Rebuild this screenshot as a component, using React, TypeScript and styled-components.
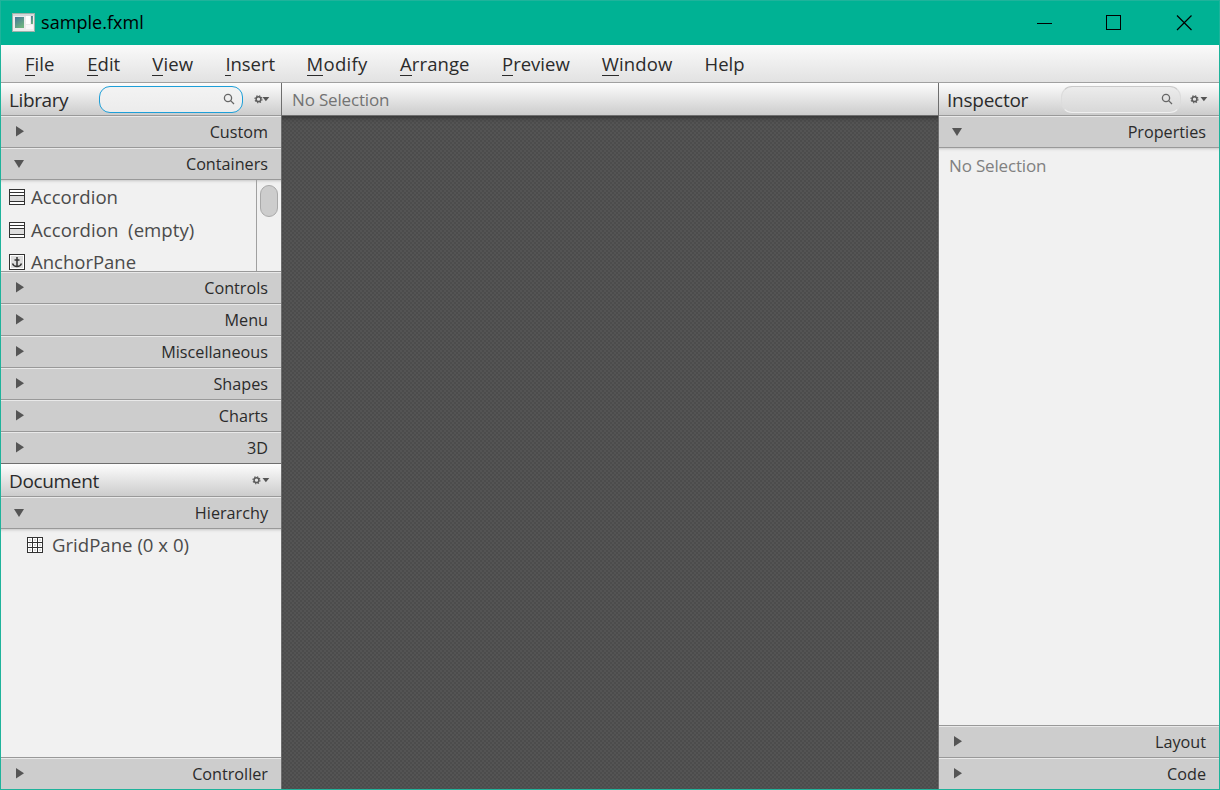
import React from "react";
import styled, { createGlobalStyle } from "styled-components";

const GlobalStyle = createGlobalStyle`
  * { box-sizing: border-box; }
  body { margin: 0; overflow: hidden; font-family: "Open Sans", "Noto Sans", sans-serif; color: #2a2a2a; }
`;

const Win = styled.div`
  width: 1220px;
  height: 790px;
  display: flex;
  flex-direction: column;
  border: 1px solid #1fb39b;
  background: #f1f1f1;
`;

const Label = styled.span<{ $size: number; $color?: string; $gap?: number }>`
  font-size: ${(p) => p.$size}px;
  line-height: 24px;
  letter-spacing: ${(p) => p.$gap ?? 0}px;
  color: ${(p) => p.$color ?? "#2b2b2b"};
  white-space: pre;
`;

const ItemLabel = styled(Label)`
  line-height: 16px;
`;

const Heading = styled(Label)`
  padding-top: 2px;
  margin-right: auto;
`;

const TitleBar = styled.header`
  height: 44px;
  flex: none;
  display: flex;
  align-items: center;
  background: #00b294;
  padding: 0 18px 2px 11px;
  gap: 6px;
`;

const WindowButtons = styled.div`
  margin-left: auto;
  padding: 2px 8px 0 0;
  display: flex;
  gap: 54px;
`;

const MenuBar = styled.nav`
  height: 38px;
  flex: none;
  display: flex;
  align-items: center;
  padding-left: 24px;
  background: linear-gradient(#fafafa, #e2e2e2);
  border-bottom: 1px solid #a0a0a0;
`;

const MenuItem = styled(Label)<{ $after: number }>`
  margin-right: ${(p) => p.$after}px;
`;

const Mnemonic = styled.span`
  border-bottom: 1px solid #2b2b2b;
  display: inline-block;
  height: 24px;
`;

const Body = styled.main`
  flex: 1;
  min-height: 0;
  display: grid;
  grid-template-columns: 281px 656px 281px;
`;

const LeftColumn = styled.section`
  display: flex;
  flex-direction: column;
  border-right: 1px solid #6e6e6e;
  min-height: 0;
`;

const RightColumn = styled(LeftColumn)`
  border-right: 0;
  border-left: 1px solid #6e6e6e;
`;

const Header = styled.div<{ $line?: string; $indent?: number }>`
  height: 33px;
  flex: none;
  display: flex;
  align-items: center;
  padding: 0 11px 0 ${(p) => p.$indent ?? 8}px;
  background: linear-gradient(#fdfdfd, #cccccc);
  border-bottom: 1px solid ${(p) => p.$line ?? "#999"};
`;

const Search = styled.div<{ $focused?: boolean; $w: number }>`
  width: ${(p) => p.$w}px;
  height: 27px;
  margin-right: 9px;
  padding-right: 7px;
  border-radius: 11px;
  border: 1px solid ${(p) => (p.$focused ? "#1d9fd8" : "#c9c9c9")};
  ${(p) => !p.$focused && "border-bottom-color:#efefef;border-right-color:#dcdcdc;border-left-color:#dcdcdc;"}
  background: ${(p) => (p.$focused ? "linear-gradient(#f3f3f3, #ececec)" : "linear-gradient(#ececec, #d8d8d8)")};
  display: flex;
  align-items: center;
  justify-content: flex-end;
`;

const Row = styled.div<{ $line?: string; $last?: boolean }>`
  height: ${(p) => (p.$last ? 31 : 32)}px;
  flex: none;
  display: flex;
  align-items: center;
  justify-content: space-between;
  padding: 0 13px;
  background: #cdcdcd;
  border-top: 1px solid #e9e9e9;
  border-bottom: ${(p) => (p.$last ? "0" : `1px solid ${p.$line ?? "#999"}`)};
`;

const Pane = styled.div<{ $h?: number }>`
  ${(p) => (p.$h ? `height: ${p.$h}px; flex: none;` : "flex: 1; min-height: 0;")}
  display: flex;
  overflow: hidden;
  background: #f1f1f1;
  border-bottom: 1px solid #999;
  box-shadow: inset 0 4px 3px -3px #c4c4c4;
`;

const List = styled.div`
  flex: 1;
  display: flex;
  flex-direction: column;
  padding-top: 1px;
`;

const ListItem = styled.div<{ $indent?: number; $h?: number; $space?: number }>`
  height: ${(p) => p.$h ?? 32.5}px;
  flex: none;
  display: flex;
  align-items: center;
  gap: ${(p) => p.$space ?? 6}px;
  padding-left: ${(p) => p.$indent ?? 8}px;
`;

const ScrollTrack = styled.div`
  width: 25px;
  border-left: 1px solid #a0a0a0;
  padding: 5px 3px;
`;

const ScrollThumb = styled.div`
  width: 18px;
  height: 32px;
  border-radius: 9px;
  background: #cdcdcd;
  border: 1px solid #a9a9a9;
`;

const Center = styled.section`
  display: flex;
  flex-direction: column;
`;

const Canvas = styled.div`
  flex: 1;
  background-color: #505050;
  background-image: conic-gradient(#4c4c4c 25%, #545454 0 50%, #4c4c4c 0 75%, #545454 0);
  background-size: 4px 4px;
  box-shadow: inset 0 5px 4px -3px #333;
`;

const Arrow = ({ open }: { open?: boolean }) => (
  <svg width="12" height="12" viewBox="0 0 12 12" fill="#555">
    {open ? <path d="M0 2H10L5 10Z" /> : <path d="M2 0V10.4L10 5.2Z" />}
  </svg>
);

const Magnifier = () => (
  <svg width="12" height="12" viewBox="0 0 12 12" fill="none" stroke="#666" strokeWidth="1.3">
    <circle cx="5" cy="5" r="3.6" />
    <path d="M7.6 7.6L11 11" />
  </svg>
);

const Gear = ({ tight }: { tight?: boolean }) => (
  <svg width="18" height="10" viewBox="0 0 18 10">
    <g fill="none" stroke="#5a5a5a" transform={tight ? "translate(2 0)" : undefined}>
      <circle cx="4.5" cy="5.2" r="2.4" strokeWidth="1.5" />
      <circle cx="4.5" cy="5.2" r="3.5" strokeWidth="1.1" strokeDasharray="1.375 1.375" />
    </g>
    <path d="M10.5 3H17.3L13.9 7.2Z" fill="#555" />
  </svg>
);

const AccordionIcon = () => (
  <svg width="16" height="16" viewBox="0 0 16 16" fill="#fff" stroke="#333" shapeRendering="crispEdges">
    <rect x=".5" y=".5" width="15" height="15" />
    <path d="M1 7h14v5H1z" fill="#ddd" stroke="none" />
    <path d="M0 3.5H16M0 6.5H16M0 12.5H16" />
  </svg>
);

const AnchorIcon = () => (
  <svg width="16" height="16" viewBox="0 0 16 16" fill="none" stroke="#333">
    <rect x=".5" y=".5" width="15" height="15" fill="#fff" />
    <path d="M2 2h12v12H2z" fill="#ddd" stroke="none" />
    <path d="M8 3V13M5.5 6H10.5" strokeWidth="1.5" />
    <path d="M3.5 9.5Q4.5 12.5 8 12.5Q11.5 12.5 12.5 9.5" strokeWidth="1.4" />
  </svg>
);

const GridIcon = () => (
  <svg width="16" height="16" viewBox="0 0 16 16" shapeRendering="crispEdges">
    <rect x=".5" y=".5" width="15" height="15" fill="#fff" stroke="#333" />
    <path d="M2 3h2M7 3h2M12 3h2M2 8h2M7 8h2M12 8h2M2 13h2M7 13h2M12 13h2" stroke="#ddd" strokeWidth="2" />
    <path d="M5.5 0V16M10.5 0V16M0 5.5H16M0 10.5H16" stroke="#333" fill="none" />
  </svg>
);

const AppIcon = () => (
  <svg width="23" height="19" viewBox="0 0 23 19">
    <defs>
      <linearGradient id="pane" x1="0" y1="0" x2="0.6" y2="1">
        <stop offset="0" stopColor="#45769a" />
        <stop offset="1" stopColor="#6db380" />
      </linearGradient>
    </defs>
    <rect x=".5" y=".5" width="22" height="18" fill="#ececec" stroke="#9fb0aa" />
    <rect x="1" y="1" width="21" height="2" fill="#d5d8da" />
    <rect x="3" y="4" width="9" height="11" fill="url(#pane)" />
    <rect x="14" y="3" width="4" height="8" fill="#fff" />
    <rect x="14" y="12" width="7" height="4" fill="#f8f8f8" />
    <rect x="19" y="3" width="2" height="8" fill="url(#pane)" />
  </svg>
);

const menus = [
  { name: "File", after: 33 },
  { name: "Edit", after: 32 },
  { name: "View", after: 32, gap: 0.2 },
  { name: "Insert", after: 31.5, gap: -0.05 },
  { name: "Modify", after: 32.5, gap: 0.3 },
  { name: "Arrange", after: 32.5, gap: 0.08 },
  { name: "Preview", after: 32 },
  { name: "Window", after: 32, gap: 0.15 },
  { name: "Help", after: 0 },
];

const Section = ({ name, open, line, last }: { name: string; open?: boolean; line?: string; last?: boolean }) => (
  <Row $line={line} $last={last}>
    <Arrow open={open} />
    <Label $size={16.2}>{name}</Label>
  </Row>
);

export default function App() {
  return (
    <Win>
      <GlobalStyle />
      <TitleBar>
        <AppIcon />
        <Label $size={18} $color="#000" $gap={0.05}>sample.fxml</Label>
        <WindowButtons>
          <svg width="15" height="16" stroke="#000" shapeRendering="crispEdges"><path d="M0 8.5H15" /></svg>
          <svg width="16" height="16" stroke="#000" fill="none" shapeRendering="crispEdges"><path d="M.5 .5H14.5V14.5H.5Z" /></svg>
          <svg width="17" height="16" stroke="#000" strokeWidth="1.2"><path d="M1 .5L15.5 15M15.5 .5L1 15" /></svg>
        </WindowButtons>
      </TitleBar>
      <MenuBar>
        {menus.map((m) => (
          <MenuItem key={m.name} $size={18.5} $gap={m.gap} $after={m.after}>
            {m.name === "Help" ? m.name : <><Mnemonic>{m.name[0]}</Mnemonic>{m.name.slice(1)}</>}
          </MenuItem>
        ))}
      </MenuBar>
      <Body>
        <LeftColumn>
          <Header>
            <Heading $size={19} $gap={-0.4}>Library</Heading>
            <Search $focused $w={144}><Magnifier /></Search>
            <Gear tight />
          </Header>
          <Section name="Custom" />
          <Section name="Containers" open />
          <Pane $h={92}>
            <List>
              <ListItem><AccordionIcon /><ItemLabel $size={18.6} $color="#4b4b4b">Accordion</ItemLabel></ListItem>
              <ListItem><AccordionIcon /><ItemLabel $size={18.6} $color="#4b4b4b" $gap={0.04}>Accordion  (empty)</ItemLabel></ListItem>
              <ListItem $h={32}><AnchorIcon /><ItemLabel $size={18.5} $color="#4b4b4b">AnchorPane</ItemLabel></ListItem>
            </List>
            <ScrollTrack><ScrollThumb /></ScrollTrack>
          </Pane>
          {["Controls", "Menu", "Miscellaneous", "Shapes", "Charts"].map((n) => <Section key={n} name={n} />)}
          <Section name="3D" line="#6e6e6e" />
          <Header>
            <Heading $size={19} $gap={-0.35}>Document</Heading>
            <Gear />
          </Header>
          <Section name="Hierarchy" open />
          <Pane>
            <List>
              <ListItem $indent={26} $h={29} $space={9}><GridIcon /><ItemLabel $size={18.6} $color="#4b4b4b">GridPane (0 x 0)</ItemLabel></ListItem>
            </List>
          </Pane>
          <Section name="Controller" last />
        </LeftColumn>
        <Center>
          <Header $line="#6e6e6e" $indent={10}>
            <Heading $size={17} $gap={-0.17} $color="#737373">No Selection</Heading>
          </Header>
          <Canvas />
        </Center>
        <RightColumn>
          <Header>
            <Heading $size={19} $gap={-0.25}>Inspector</Heading>
            <Search $w={120}><Magnifier /></Search>
            <Gear />
          </Header>
          <Section name="Properties" open />
          <Pane>
            <ListItem $indent={10} $h={36}><Label $size={17} $gap={-0.17} $color="#808080">No Selection</Label></ListItem>
          </Pane>
          <Section name="Layout" />
          <Section name="Code" last />
        </RightColumn>
      </Body>
    </Win>
  );
}
